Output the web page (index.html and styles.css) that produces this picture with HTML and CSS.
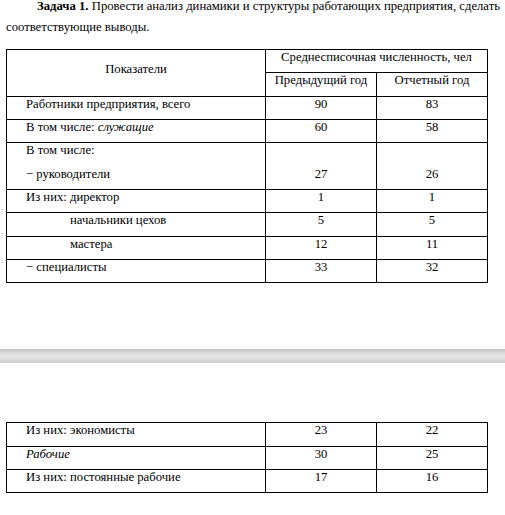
FILE: index.html
```html
<!DOCTYPE html>
<html lang="ru">
<head>
<meta charset="utf-8">
<link rel="stylesheet" href="styles.css">
</head>
<body>
<div class="page">
  <div class="task">
    <div class="line first"><b>Задача 1.</b> Провести анализ динамики и структуры работающих предприятия, сделать</div>
    <div class="line">соответствующие выводы.</div>
  </div>

  <table class="grid">
    <colgroup><col class="c1"><col class="c2"><col class="c3"></colgroup>
    <tr>
      <th rowspan="2" class="head">Показатели</th>
      <th colspan="2" class="head">Среднесписочная численность, чел</th>
    </tr>
    <tr>
      <th class="head">Предыдущий год</th>
      <th class="head">Отчетный год</th>
    </tr>
    <tr><td class="name">Работники предприятия, всего</td><td class="num">90</td><td class="num">83</td></tr>
    <tr><td class="name">В том числе: <i>служащие</i></td><td class="num">60</td><td class="num">58</td></tr>
    <tr><td class="name"><div class="para">В том числе:</div><div>− руководители</div></td><td class="num">27</td><td class="num">26</td></tr>
    <tr><td class="name">Из них: директор</td><td class="num">1</td><td class="num">1</td></tr>
    <tr><td class="name sub">начальники цехов</td><td class="num">5</td><td class="num">5</td></tr>
    <tr><td class="name sub">мастера</td><td class="num">12</td><td class="num">11</td></tr>
    <tr><td class="name">− специалисты</td><td class="num">33</td><td class="num">32</td></tr>
  </table>

  <div class="page-gap"></div>

  <table class="grid second">
    <colgroup><col class="c1"><col class="c2"><col class="c3"></colgroup>
    <tr><td class="name">Из них: экономисты</td><td class="num">23</td><td class="num">22</td></tr>
    <tr><td class="name"><i>Рабочие</i></td><td class="num">30</td><td class="num">25</td></tr>
    <tr><td class="name">Из них: постоянные рабочие</td><td class="num">17</td><td class="num">16</td></tr>
  </table>
</div>
</body>
</html>
```

FILE: styles.css
```css
html, body {
  margin: 0;
  padding: 0;
  background: #fff;
}

body {
  font-family: "Liberation Serif", "Times New Roman", serif;
  font-size: 12.7px;
  color: #000;
}

.page {
  display: flex;
  flex-direction: column;
  overflow: hidden;
  height: 515px;
}

.task {
  margin: -4px 0 0 6px;
  width: 494px;
  line-height: 21px;
}

.task .first {
  text-indent: 31px;
  text-align: justify;
  text-align-last: justify;
  white-space: nowrap;
}

.grid {
  border-collapse: collapse;
  margin: 11px 0 0 6px;
  width: 481px;
  table-layout: fixed;
}

.grid .c1 { width: 259px; }
.grid .c2 { width: 111px; }
.grid .c3 { width: 111px; }

.grid th,
.grid td {
  border: 1px solid #000;
  line-height: 15.33px;
  padding: 0 0 7px 0;
  font-weight: normal;
}

.grid .head {
  text-align: center;
  vertical-align: middle;
}

.grid .name {
  text-align: left;
  padding-left: 19px;
  vertical-align: top;
}

.grid .name.sub {
  padding-left: 63px;
}

.grid .para {
  margin-bottom: 8px;
}

.grid .num {
  text-align: center;
  vertical-align: bottom;
}

.page-gap {
  margin-top: 66px;
  height: 14px;
  background: linear-gradient(#c3c3c3 0%, #d8d8d8 25%, #e6e6e6 50%, #dddddd 75%, #cccccc 100%);
}

.grid.second {
  margin-top: 59px;
}
```
